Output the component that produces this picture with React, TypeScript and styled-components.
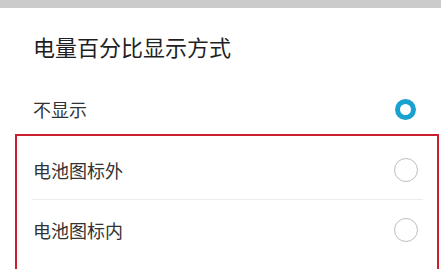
import styled, { createGlobalStyle } from 'styled-components';

const GlobalStyle = createGlobalStyle`
  body {
    margin: 0;
    background: #ffffff;
    font-family: 'Noto Sans CJK SC', 'Noto Sans', sans-serif;
    overflow: hidden;
  }
`;

const options = [
  { label: '不显示', checked: true },
  { label: '电池图标外', checked: false },
  { label: '电池图标内', checked: false },
];

const App = () => {
  const [first, ...rest] = options;

  return (
    <Page>
      <GlobalStyle />
      <TopBar />
      <Title>电量百分比显示方式</Title>
      <FirstRow>
        <Label>{first.label}</Label>
        <Radio checked={first.checked} />
      </FirstRow>
      <Highlight>
        {rest.map((opt, i) => (
          <Row key={opt.label} divider={i < rest.length - 1}>
            <Label>{opt.label}</Label>
            <Radio checked={opt.checked} />
          </Row>
        ))}
      </Highlight>
    </Page>
  );
};

export default App;

const Page = styled.div`
  width: 441px;
  height: 269px;
  overflow: hidden;
`;

const TopBar = styled.div`
  height: 8px;
  background: #cbcbcb;
`;

const Title = styled.h1`
  margin: 25px 0 0;
  padding-left: 33px;
  font-size: 22px;
  line-height: 26px;
  font-weight: 400;
  color: #1f1f1f;
`;

const FirstRow = styled.div`
  display: flex;
  align-items: center;
  justify-content: space-between;
  height: 50px;
  margin-top: 25px;
  padding: 0 24px 0 33px;
`;

const Highlight = styled.section`
  margin: 0 2px 0 15px;
  padding-top: 4px;
  height: 140px;
  border: 2.5px solid #cc1f2d;
`;

const Row = styled.div<{ divider: boolean }>`
  display: flex;
  align-items: center;
  justify-content: space-between;
  height: 59px;
  margin: 0 14px 0 15px;
  padding: 0 5px 0 1px;
  border-bottom: 1px solid ${({ divider }) => (divider ? '#ececec' : 'transparent')};
`;

const Label = styled.span`
  font-size: 18px;
  color: #333333;
`;

const Radio = styled.span<{ checked: boolean }>`
  box-sizing: border-box;
  display: block;
  border-radius: 50%;
  background: #ffffff;
  width: ${({ checked }) => (checked ? '21px' : '24px')};
  height: ${({ checked }) => (checked ? '21px' : '24px')};
  margin-right: ${({ checked }) => (checked ? '1.5px' : '0')};
  border: ${({ checked }) => (checked ? '5.5px solid #19a2d0' : '1.5px solid #bdbdbd')};
`;
